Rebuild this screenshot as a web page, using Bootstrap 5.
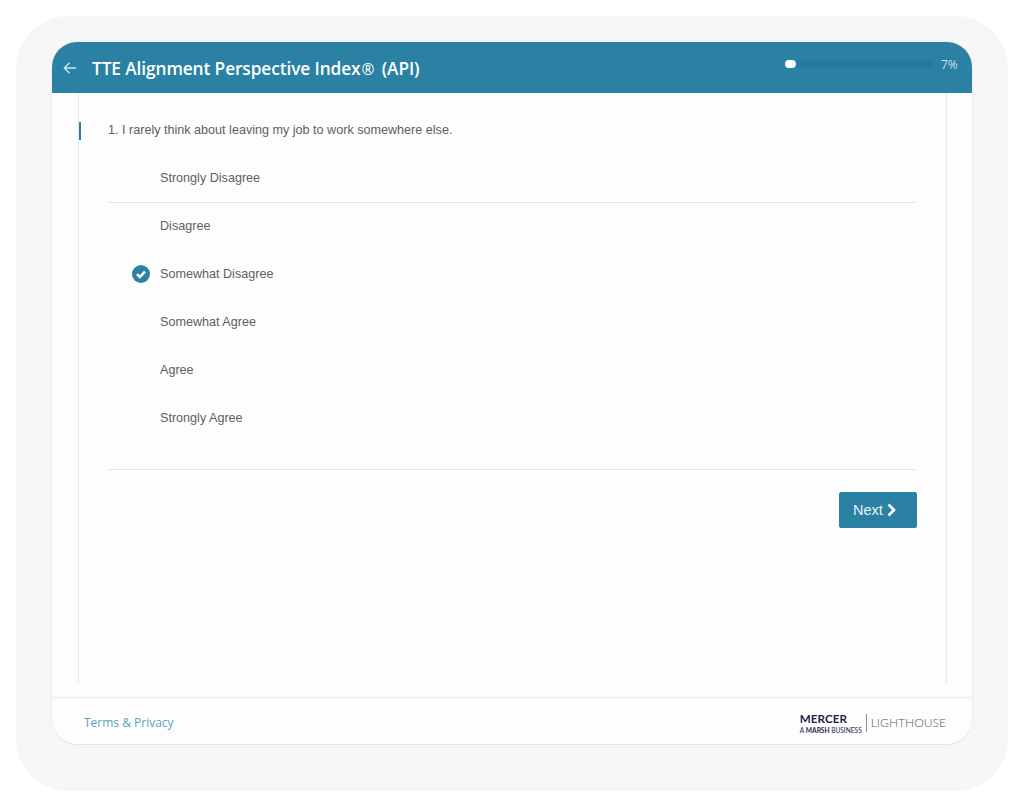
<!DOCTYPE html>
<html lang="en">
<head>
<meta charset="utf-8">
<title>TTE Alignment Perspective Index</title>
<link rel="stylesheet" href="https://cdn.jsdelivr.net/npm/bootstrap@5.3.0/dist/css/bootstrap.min.css">
<style>
html,body{height:807px;overflow:hidden;background:#fff}
.frame-outer{margin:16px 16px 16px;height:775px;background:#f6f6f6;border-radius:52px;padding:26px 36px 47px}
.device{height:702px;background:#fdfdfd;border-radius:25px;box-shadow:0 1px 0 #e3e3e3,0 0 0 1px #f0f0f0;display:flex;flex-direction:column}
.topbar{height:51px;background:#2a81a4;border-radius:25px 25px 0 0;color:#fff;padding:0 12px 0 11px;flex:none}
.back-ico{width:14px;height:14px;margin-right:15px;display:block}
.survey-title{font-family:"Open Sans",sans-serif;font-weight:600;font-size:17.3px;letter-spacing:-.1px;line-height:1;margin:2px 0 0}
.survey-title span{margin:0 3px 0 1px;font-weight:400;font-size:15.5px}
.prog-track{width:149px;height:8px;border-radius:4px;background:#287a9c;margin-right:7px;margin-top:-7px}
.prog-fill{width:11px;height:8px;border-radius:4px;background:#fff}
.prog-label{font-family:"Open Sans",sans-serif;font-size:12px;color:#c5dfe9;margin-top:-5px;width:19px}
.work{flex:1;margin:0 25px 14px 26px;border-left:1px solid #e6e6e6;border-right:1px solid #e6e6e6;padding:0 29px 0 29px;position:relative;font-family:"Liberation Sans",sans-serif;color:#606060;font-size:12.6px}
.accent{position:absolute;left:0;top:29px;width:2px;height:18px;background:#2a81a4}
.question{padding-top:29px;height:60px;line-height:16px}
.answers{height:317px;border-bottom:1px solid #e6e6e6}
.answer{height:48px;padding-left:24px}
.answer-first{height:50px;padding-top:1px;border-bottom:1px solid #e6e6e6;margin-bottom:-1px}
.mark-slot{width:18px;height:18px;margin-right:10px;display:block;flex:none}
.answer span{font-size:12.6px}
.next-row{padding-top:22px}
.next-btn{width:78px;height:36px;background:#2a81a4;border:1px solid #2a81a4;border-radius:2px;color:#e9f3f7;font-size:14.5px;padding:2px 0 0 13px;text-align:left;display:flex;align-items:center}
.next-btn:hover{background:#2a81a4;color:#fff}
.next-btn svg{width:11px;height:14px;margin-left:3px;margin-top:-2px}
.foot{height:47px;flex:none;border-top:1px solid #e9e9e9;padding:4px 26px 0 32px}
.terms{font-family:"Open Sans",sans-serif;font-size:12px;color:#5b9fba;text-decoration:none}
.brand-a{font-family:"Lato",sans-serif;color:#1b2450;line-height:1}
.brand-main{font-weight:700;font-size:11.6px;letter-spacing:.1px}
.brand-sub{font-size:6.6px;margin-top:2px;font-weight:700;white-space:nowrap}
.brand-sub i{font-style:normal;font-weight:400}
.brand-rule{width:1px;height:18px;background:#8a8fa3;margin:0 4px 0 4px}
.brand-b{font-family:"Lato",sans-serif;font-weight:300;font-size:12.1px;color:#4e5c6e;line-height:1}
</style>
</head>
<body>
<div class="frame-outer">
  <div class="device">
    <header class="topbar d-flex align-items-center">
      <svg class="back-ico" viewBox="0 0 14 14" fill="none" stroke="#cfe4ec" stroke-width="1.3"><path d="M13 7H1.5M6.5 1.8 1.3 7l5.2 5.2"/></svg>
      <h1 class="survey-title">TTE Alignment Perspective Index<span>®</span> (API)</h1>
      <div class="ms-auto d-flex align-items-center">
        <div class="prog-track"><div class="prog-fill"></div></div>
        <div class="prog-label">7%</div>
      </div>
    </header>
    <main class="work">
      <div class="accent"></div>
      <div class="question">1. I rarely think about leaving my job to work somewhere else.</div>
      <div class="answers">
        <div class="answer answer-first d-flex align-items-center"><div class="mark-slot"></div><span>Strongly Disagree</span></div>
        <div class="answer d-flex align-items-center"><div class="mark-slot"></div><span>Disagree</span></div>
        <div class="answer d-flex align-items-center">
          <svg class="mark-slot" viewBox="0 0 18 18"><circle cx="9" cy="9" r="9" fill="#2a81a4"/><path d="M4.9 9.2 7.8 11.9 13 6.6" fill="none" stroke="#fff" stroke-width="2.5"/></svg>
          <span>Somewhat Disagree</span></div>
        <div class="answer d-flex align-items-center"><div class="mark-slot"></div><span>Somewhat Agree</span></div>
        <div class="answer d-flex align-items-center"><div class="mark-slot"></div><span>Agree</span></div>
        <div class="answer d-flex align-items-center"><div class="mark-slot"></div><span>Strongly Agree</span></div>
      </div>
      <div class="next-row d-flex justify-content-end">
        <button type="button" class="btn next-btn">Next<svg viewBox="0 0 11 14" fill="none" stroke="#fff" stroke-width="2.6"><path d="M2.5 1.5 8 7l-5.5 5.5"/></svg></button>
      </div>
    </main>
    <footer class="foot d-flex align-items-center justify-content-between">
      <a class="terms" href="#">Terms &amp; Privacy</a>
      <div class="d-flex align-items-center">
        <div class="brand-a"><div class="brand-main">MERCER</div><div class="brand-sub"><i>A</i> MARSH <i>BUSINESS</i></div></div>
        <div class="brand-rule"></div>
        <div class="brand-b">LIGHTHOUSE</div>
      </div>
    </footer>
  </div>
</div>
<script src="https://cdn.jsdelivr.net/npm/bootstrap@5.3.0/dist/js/bootstrap.bundle.min.js"></script>
</body>
</html>
